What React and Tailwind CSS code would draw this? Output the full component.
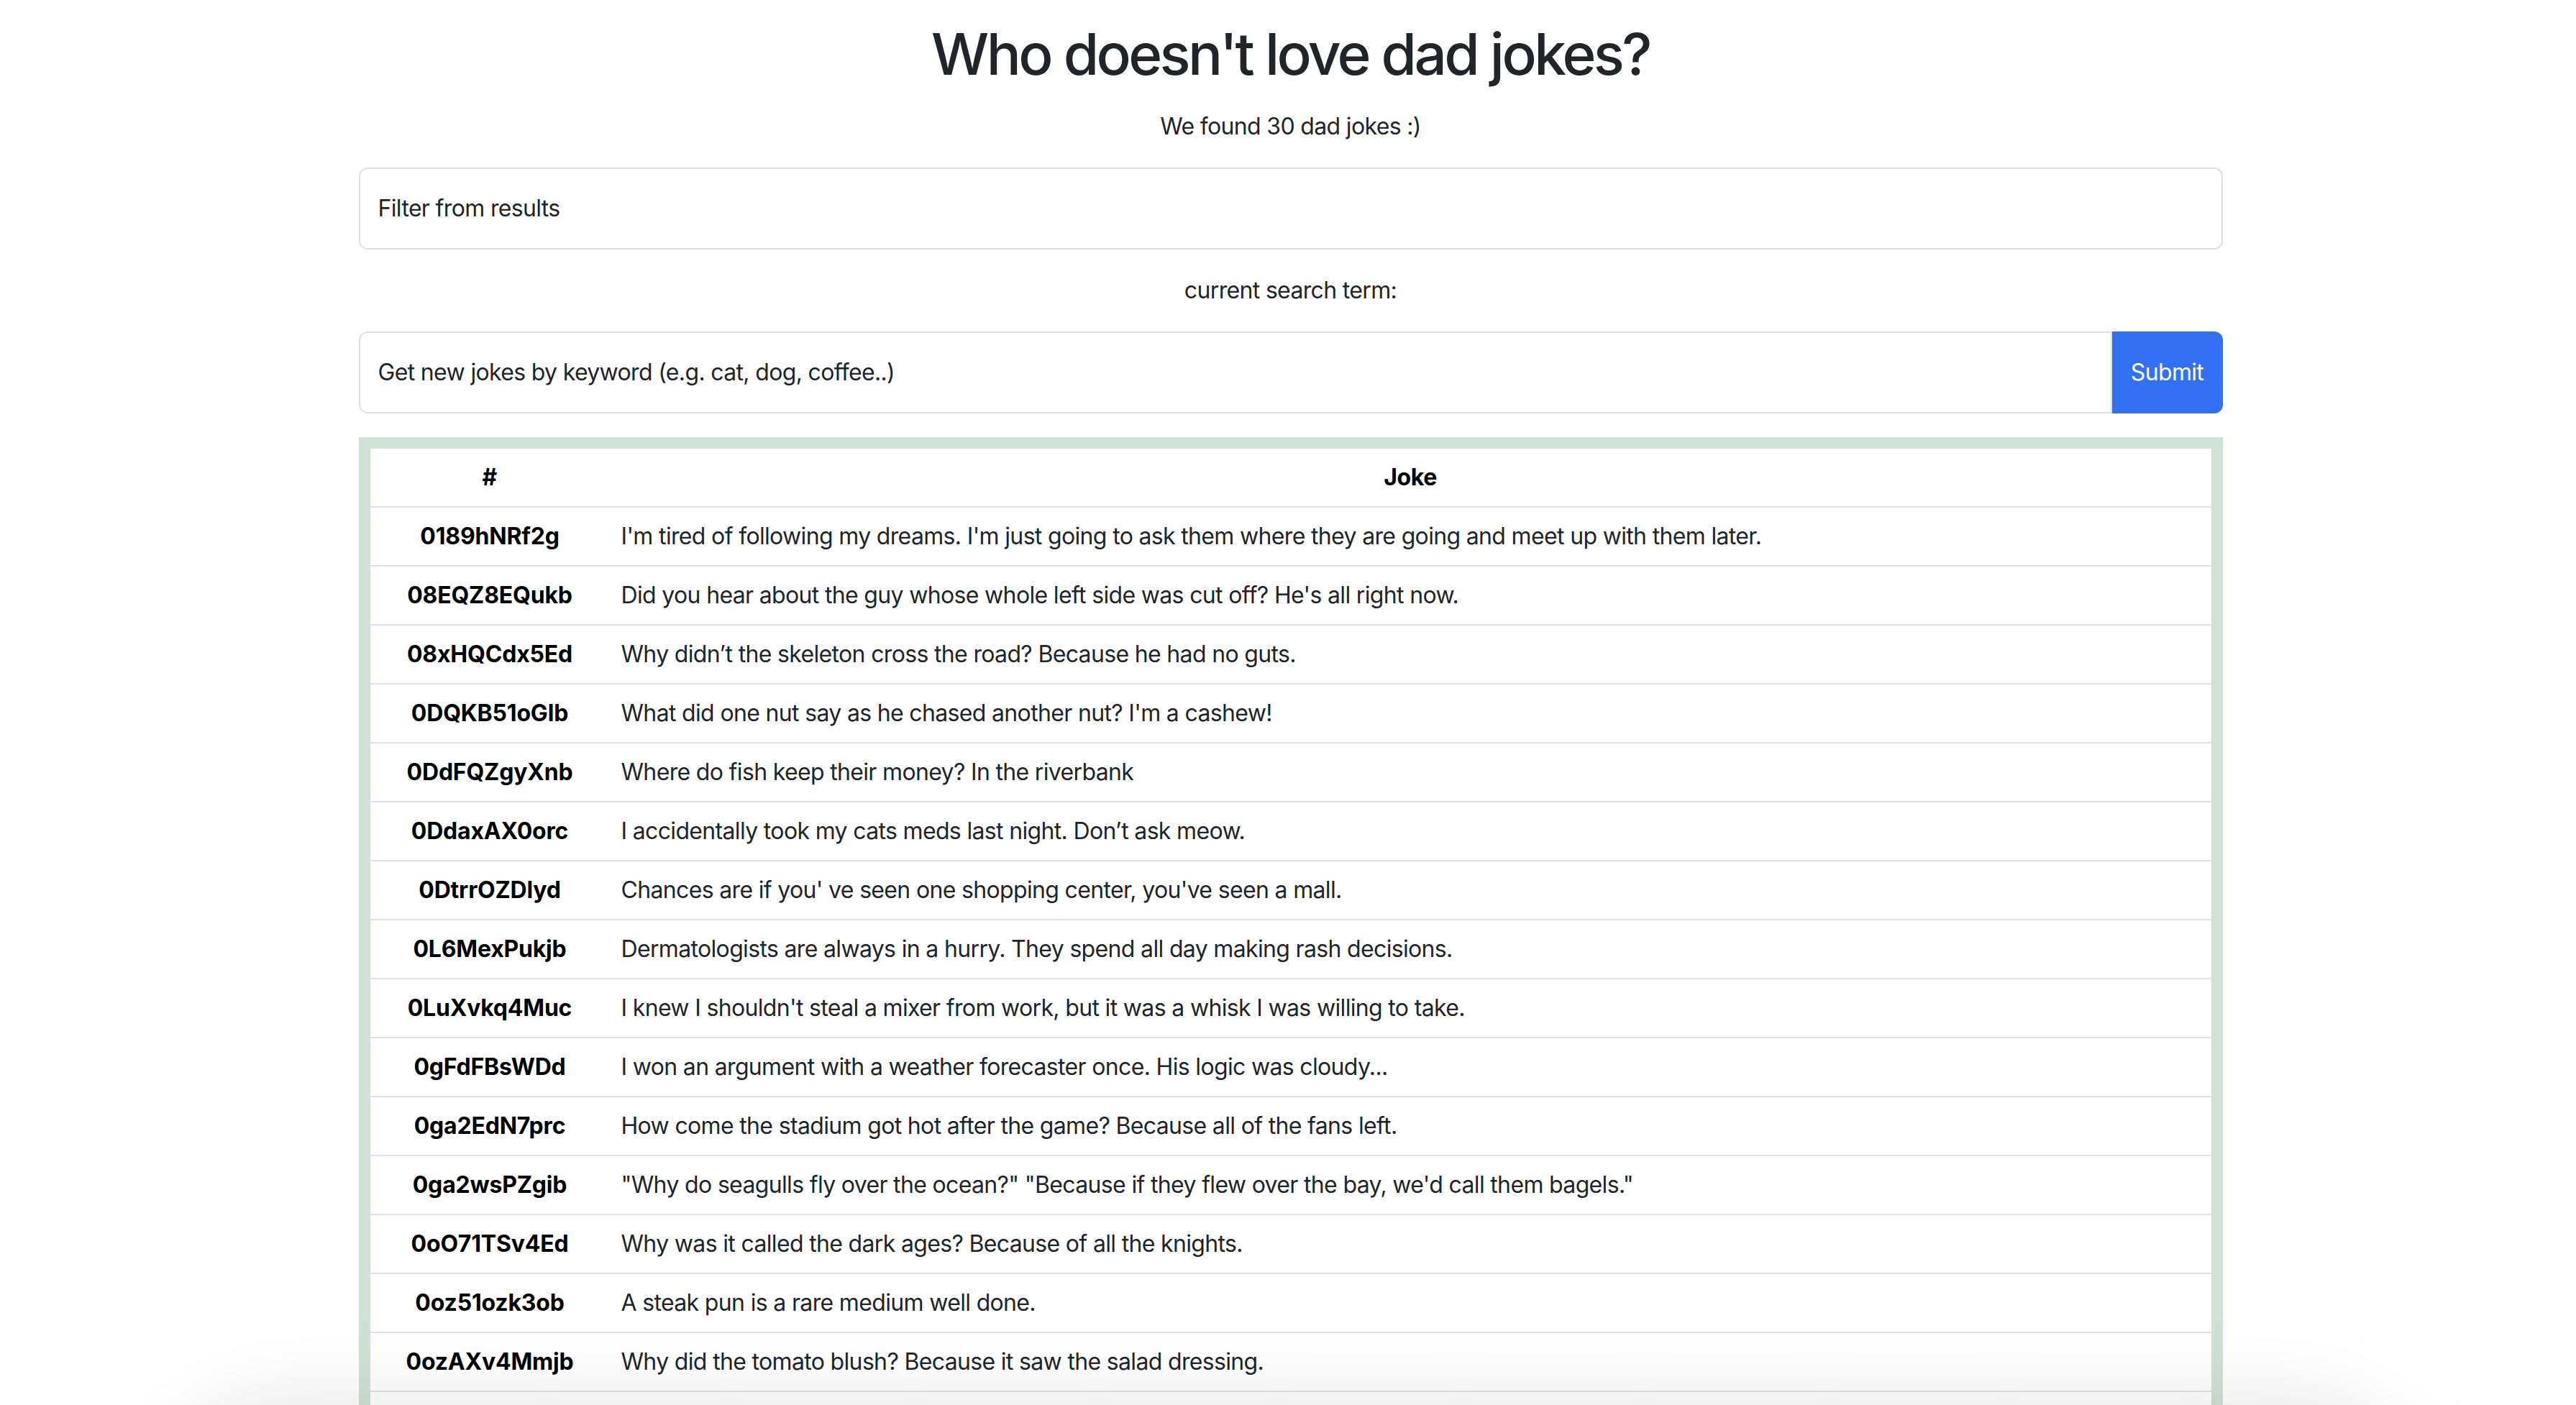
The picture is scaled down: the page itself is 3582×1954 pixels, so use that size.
const jokes = [
  ['0189hNRf2g', "I'm tired of following my dreams. I'm just going to ask them where they are going and meet up with them later."],
  ['08EQZ8EQukb', "Did you hear about the guy whose whole left side was cut off? He's all right now."],
  ['08xHQCdx5Ed', 'Why didn’t the skeleton cross the road? Because he had no guts.'],
  ['0DQKB51oGlb', "What did one nut say as he chased another nut? I'm a cashew!"],
  ['0DdFQZgyXnb', 'Where do fish keep their money? In the riverbank'],
  ['0DdaxAX0orc', 'I accidentally took my cats meds last night. Don’t ask meow.'],
  ['0DtrrOZDlyd', "Chances are if you' ve seen one shopping center, you've seen a mall."],
  ['0L6MexPukjb', 'Dermatologists are always in a hurry. They spend all day making rash decisions.'],
  ['0LuXvkq4Muc', "I knew I shouldn't steal a mixer from work, but it was a whisk I was willing to take."],
  ['0gFdFBsWDd', 'I won an argument with a weather forecaster once. His logic was cloudy...'],
  ['0ga2EdN7prc', 'How come the stadium got hot after the game? Because all of the fans left.'],
  ['0ga2wsPZgib', '"Why do seagulls fly over the ocean?" "Because if they flew over the bay, we\'d call them bagels."'],
  ['0oO71TSv4Ed', 'Why was it called the dark ages? Because of all the knights.'],
  ['0oz51ozk3ob', 'A steak pun is a rare medium well done.'],
  ['0ozAXv4Mmjb', 'Why did the tomato blush? Because it saw the salad dressing.'],
  ['0wcFBQfiGBd', 'Did you hear the news? FedEx and UPS are merging. They’re going to go by the name Fed-Up from now on.'],
  ['0xx3Be7HSlb', 'What do you call a fake noodle? An impasta.'],
]

export default function App() {
  return (
    <div className="min-h-screen bg-white pl-[7px] text-[#212529] font-['Inter','Liberation_Sans',sans-serif]">
      <div className="mx-auto w-[2592px] pt-[27px]">
        <h1 className="text-center text-[80px] leading-[96px] font-medium tracking-[-3.6px]">
          Who doesn't love dad jokes?
        </h1>
        <p className="mt-[29px] text-center text-[32px] leading-[48px] tracking-[-0.66px]">We found 30 dad jokes :)</p>

        {/* filter */}
        <div className="mt-[33px] h-[114px] rounded-[12px] border-2 border-[#dee2e6] flex items-center px-[25px]">
          <span className="text-[32px] leading-[48px] tracking-[-0.66px]">Filter from results</span>
        </div>

        <p className="mt-[33px] text-center text-[32px] leading-[48px] tracking-[-0.66px]">current search term:</p>

        {/* keyword search */}
        <div className="mt-[33px] flex h-[114px]">
          <div className="flex-1 rounded-l-[12px] border-2 border-[#dee2e6] flex items-center px-[25px]">
            <span className="text-[32px] leading-[48px] tracking-[-0.66px]">Get new jokes by keyword (e.g. cat, dog, coffee..)</span>
          </div>
          <button className="w-[154px] rounded-r-[12px] bg-[#3470f3] text-white text-[32px] leading-[48px] tracking-[-0.66px]">
            Submit
          </button>
        </div>

        {/* results */}
        <div className="mt-[33px] border-[16px] border-[#cfe2d6]">
          <table className="w-full border-collapse text-[32px] leading-[48px]">
            <thead>
              <tr className="border-b-2 border-[#dee2e6]">
                <th className="w-[333px] py-[16px] px-[16px] text-center font-bold text-black">#</th>
                <th className="py-[16px] px-[16px] text-center font-bold text-black tracking-[-0.4px]">Joke</th>
              </tr>
            </thead>
            <tbody>
              {jokes.map(([id, joke]) => (
                <tr key={id} className="border-b-2 border-[#dee2e6]">
                  <th className="py-[16px] px-[16px] text-center font-bold text-black tracking-[-0.2px]">{id}</th>
                  <td className="py-[16px] px-[16px] text-left tracking-[-0.66px]">{joke}</td>
                </tr>
              ))}
            </tbody>
          </table>
        </div>
      </div>

      {/* shadow from the bar below the fold */}
      <div className="pointer-events-none fixed left-[280px] right-[280px] top-[2030px] h-[200px] rounded-[100px] shadow-[0_0_160px_40px_rgba(0,0,0,0.17)]" />
    </div>
  )
}
